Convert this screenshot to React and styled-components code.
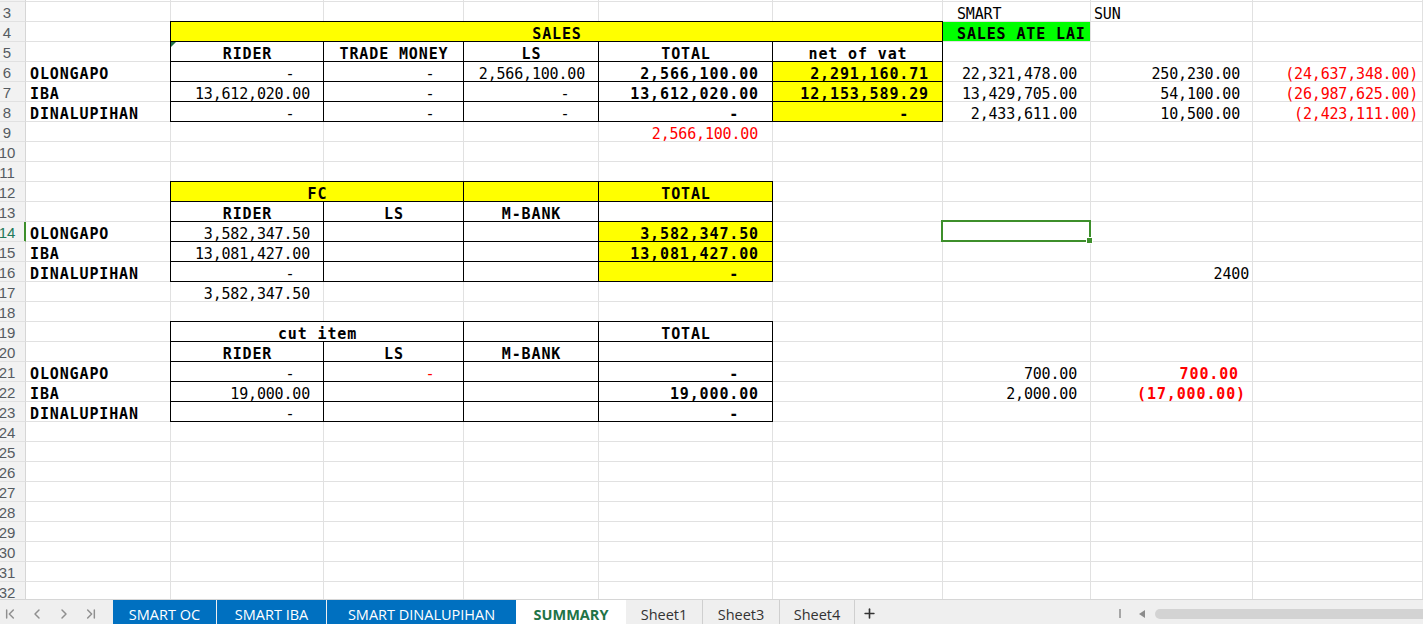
import React from "react";
import styled, { createGlobalStyle } from "styled-components";
import { ChevronFirst, ChevronLeft, ChevronRight, ChevronLast, Plus } from "lucide-react";

const GlobalStyle = createGlobalStyle`
  html, body {
    margin: 0;
    padding: 0;
    background: #fff;
    overflow: hidden;
  }
`;

const Window = styled.div`
  width: 1423px;
  height: 624px;
  display: flex;
  flex-direction: column;
  overflow: hidden;
  background: #fff;
`;

const Sheet = styled.div`
  flex: 1;
  min-height: 0;
  overflow: hidden;
  display: grid;
  grid-template-columns: 26px 145px 153px 140px 135px 174px 170px 148px 162px 1fr;
  grid-template-rows: 2px;
  grid-auto-rows: 20px;
  align-content: start;
`;

const fills = { yellow: "#ffff00", green: "#00ff00" };
const grid = "#e1e1e1";

const RowHead = styled.div`
  box-sizing: border-box;
  background: #f2f2f2;
  border-right: 1px solid ${(p) => (p.$active ? "#3d8f2b" : "#d6d6d6")};
  box-shadow: ${(p) => (p.$active ? "inset -1px 0 0 #3d8f2b" : "none")};
  border-bottom: 1px solid ${grid};
  padding: 1px 11px 0 0;
  display: flex;
  align-items: center;
  justify-content: center;
  font-family: "Liberation Sans", Arial, sans-serif;
  font-size: 15px;
  color: ${(p) => (p.$active ? "#21795a" : "#555b61")};
  white-space: nowrap;
`;

const Cell = styled.div`
  position: ${(p) => (p.$rel ? "relative" : "static")};
  box-sizing: border-box;
  grid-column: span ${(p) => p.$span || 1};
  min-width: 0;
  background: ${(p) => fills[p.$fill] || "#fff"};
  border-right: 1px solid ${(p) => (p.$box ? "#000" : grid)};
  border-bottom: 1px solid ${(p) => (p.$box ? "#000" : grid)};
  box-shadow: ${(p) =>
    p.$box ? "-1px 0 0 #000, 0 -1px 0 #000, -1px -1px 0 #000" : "none"};
  display: flex;
  align-items: flex-end;
  justify-content: ${(p) =>
    p.$align === "center" ? "center" : p.$align === "right" ? "flex-end" : "flex-start"};
  padding: 0 ${(p) => p.$pr ?? 3}px 0 ${(p) => p.$pl ?? 4}px;
  font-family: "DejaVu Sans Mono", "Liberation Mono", monospace;
  font-size: 15px;
  line-height: 13px;
  font-weight: ${(p) => (p.$bold ? 700 : 400)};
  letter-spacing: ${(p) => (p.$bold ? "0.87px" : "-0.18px")};
  color: ${(p) => (p.$red ? "#ff0000" : "#000")};
  white-space: pre;
`;

const Marker = styled.span`
  position: absolute;
  left: 0;
  top: 0;
  z-index: 2;
  width: 0;
  height: 0;
  border-top: 5px solid #217346;
  border-right: 5px solid transparent;
`;

const Selection = styled.div`
  position: absolute;
  left: -2px;
  top: -2px;
  right: -1px;
  bottom: -1px;
  z-index: 3;
  border: 2px solid #3d8f2b;
  pointer-events: none;
`;

const Handle = styled.span`
  position: absolute;
  right: -4px;
  bottom: -4px;
  width: 5px;
  height: 5px;
  background: #3d8f2b;
  border: 1px solid #fff;
`;

/* ---- sheet tabs ---- */

const TabBar = styled.div`
  flex: none;
  height: 25px;
  box-sizing: border-box;
  display: flex;
  align-items: stretch;
  background: #efefef;
  border-top: 1px solid #d6d6d6;
  overflow: hidden;
  font-family: "Open Sans", "Noto Sans", sans-serif;
  font-size: 14.5px;
`;

const Nav = styled.div`
  width: 113px;
  flex: none;
  box-sizing: border-box;
  display: flex;
  align-items: center;
  gap: 11px;
  padding: 3px 0 0 2px;
  color: #8f8f8f;
`;

const Tab = styled.div`
  flex: none;
  width: ${(p) => p.$w}px;
  margin: ${(p) => (p.$kind === "gray" ? "0" : "-1px 0 0")};
  margin-left: ${(p) => p.$gap || 0}px;
  box-sizing: border-box;
  display: flex;
  align-items: flex-end;
  justify-content: center;
  padding-bottom: 2px;
  line-height: 14px;
  white-space: nowrap;
  background: ${(p) =>
    p.$kind === "blue" ? "#0070c0" : p.$kind === "active" ? "#fff" : "#efefef"};
  color: ${(p) =>
    p.$kind === "blue" ? "#fff" : p.$kind === "active" ? "#217346" : "#333"};
  font-weight: ${(p) => (p.$kind === "active" ? 700 : 400)};
  border-left: ${(p) => (p.$kind === "gray" && p.$sep ? "1px solid #cfcfcf" : "none")};
`;

const AddTab = styled.div`
  width: 28px;
  flex: none;
  display: flex;
  align-items: center;
  justify-content: center;
  padding-top: 3px;
  border-left: 1px solid #cfcfcf;
  color: #333;
`;

const Spacer = styled.div`
  flex: 1;
`;

const ScrollArea = styled.div`
  width: 304px;
  flex: none;
  display: flex;
  align-items: center;
  padding-top: 3px;
`;

const Splitter = styled.span`
  width: 2px;
  height: 9px;
  background: #a6a6a6;
  margin-right: 18px;
`;

const LeftArrow = styled.span`
  width: 0;
  height: 0;
  border-top: 4px solid transparent;
  border-bottom: 4px solid transparent;
  border-right: 6px solid #8c8c8c;
  margin-right: 10px;
`;

const Track = styled.span`
  flex: 1;
  height: 10px;
  margin-right: -12px;
  border-radius: 5px;
  background: #d3d3d3;
`;

/* ---- data ---- */

const COLS = ["A", "B", "C", "D", "E", "F", "G", "H", "I"];

const lab = (t) => ({ t, bold: true, pl: 4 });
const head = (t, o) => ({ t, bold: true, align: "center", box: true, ...o });
const num = (t, o) => ({ t, align: "right", pr: 13, ...o });
const dash = (o) => ({ t: "-  ", align: "right", pr: o && o.bold ? 13 : 11, ...o });
const box = (o) => ({ box: true, ...o });

const ROWS = {
  3: { G: { t: "SMART", pl: 14 }, H: { t: "SUN", pl: 3 } },
  4: {
    B: head("SALES", { span: 5, fill: "yellow" }),
    G: { t: "SALES ATE LAI", bold: true, fill: "green", pl: 14 },
  },
  5: {
    B: head("RIDER", { mark: true }),
    C: head("TRADE MONEY"),
    D: head("LS"),
    E: head("TOTAL"),
    F: head("net of vat"),
  },
  6: {
    A: lab("OLONGAPO"),
    B: dash({ box: true }),
    C: dash({ box: true }),
    D: num("2,566,100.00", { box: true }),
    E: num("2,566,100.00", { box: true, bold: true }),
    F: num("2,291,160.71", { box: true, bold: true, fill: "yellow" }),
    G: num("22,321,478.00"),
    H: num("250,230.00", { pr: 12 }),
    I: num("(24,637,348.00)", { red: true, pr: 4 }),
  },
  7: {
    A: lab("IBA"),
    B: num("13,612,020.00", { box: true }),
    C: dash({ box: true }),
    D: dash({ box: true }),
    E: num("13,612,020.00", { box: true, bold: true }),
    F: num("12,153,589.29", { box: true, bold: true, fill: "yellow" }),
    G: num("13,429,705.00"),
    H: num("54,100.00", { pr: 12 }),
    I: num("(26,987,625.00)", { red: true, pr: 4 }),
  },
  8: {
    A: lab("DINALUPIHAN"),
    B: dash({ box: true }),
    C: dash({ box: true }),
    D: dash({ box: true }),
    E: dash({ box: true, bold: true }),
    F: dash({ box: true, bold: true, fill: "yellow" }),
    G: num("2,433,611.00"),
    H: num("10,500.00", { pr: 12 }),
    I: num("(2,423,111.00)", { red: true, pr: 4 }),
  },
  9: { E: num("2,566,100.00", { red: true, pr: 14 }) },
  12: {
    B: head("FC", { span: 2, fill: "yellow" }),
    D: box({ fill: "yellow" }),
    E: head("TOTAL", { fill: "yellow" }),
  },
  13: { B: head("RIDER"), C: head("LS"), D: head("M-BANK"), E: box() },
  14: {
    A: lab("OLONGAPO"),
    B: num("3,582,347.50", { box: true }),
    C: box(),
    D: box(),
    E: num("3,582,347.50", { box: true, bold: true, fill: "yellow" }),
    G: { selected: true },
  },
  15: {
    A: lab("IBA"),
    B: num("13,081,427.00", { box: true }),
    C: box(),
    D: box(),
    E: num("13,081,427.00", { box: true, bold: true, fill: "yellow" }),
  },
  16: {
    A: lab("DINALUPIHAN"),
    B: dash({ box: true }),
    C: box(),
    D: box(),
    E: dash({ box: true, bold: true, fill: "yellow" }),
    H: num("2400", { pr: 3 }),
  },
  17: { B: num("3,582,347.50") },
  19: {
    B: head("cut item", { span: 2 }),
    D: box(),
    E: head("TOTAL"),
  },
  20: { B: head("RIDER"), C: head("LS"), D: head("M-BANK"), E: box() },
  21: {
    A: lab("OLONGAPO"),
    B: dash({ box: true }),
    C: dash({ box: true, red: true }),
    D: box(),
    E: dash({ box: true, bold: true }),
    G: num("700.00"),
    H: num("700.00", { bold: true, red: true }),
  },
  22: {
    A: lab("IBA"),
    B: num("19,000.00", { box: true }),
    C: box(),
    D: box(),
    E: num("19,000.00", { box: true, bold: true }),
    G: num("2,000.00"),
    H: num("(17,000.00)", { bold: true, red: true, pr: 6 }),
  },
  23: {
    A: lab("DINALUPIHAN"),
    B: dash({ box: true }),
    C: box(),
    D: box(),
    E: dash({ box: true, bold: true }),
  },
};

const TABS = [
  { label: "SMART OC", w: 103, kind: "blue" },
  { label: "SMART IBA", w: 109, kind: "blue", gap: 1 },
  { label: "SMART DINALUPIHAN", w: 189, kind: "blue", gap: 1 },
  { label: "SUMMARY", w: 110, kind: "active" },
  { label: "Sheet1", w: 76, kind: "gray" },
  { label: "Sheet3", w: 77, kind: "gray", sep: true },
  { label: "Sheet4", w: 75, kind: "gray", sep: true },
];

function DataCell({ d = {} }) {
  return (
    <Cell
      $span={d.span}
      $box={d.box}
      $fill={d.fill}
      $bold={d.bold}
      $red={d.red}
      $align={d.align}
      $pl={d.pl}
      $pr={d.pr}
      $rel={d.mark || d.selected}
    >
      {d.t}
      {d.mark && <Marker />}
      {d.selected && (
        <Selection>
          <Handle />
        </Selection>
      )}
    </Cell>
  );
}

function SheetRow({ n, defs }) {
  const cells = [];
  for (let i = 0; i < COLS.length; ) {
    const d = defs[COLS[i]];
    cells.push(<DataCell key={COLS[i]} d={d} />);
    i += (d && d.span) || 1;
  }
  return (
    <>
      <RowHead $active={n === 14}>{n}</RowHead>
      {cells}
    </>
  );
}

export default function App() {
  const rowNums = [];
  for (let n = 3; n <= 32; n++) rowNums.push(n);

  return (
    <Window>
      <GlobalStyle />
      <Sheet>
        <RowHead />
        {COLS.map((c) => (
          <Cell key={"top" + c} />
        ))}
        {rowNums.map((n) => (
          <SheetRow key={n} n={n} defs={ROWS[n] || {}} />
        ))}
      </Sheet>
      <TabBar>
        <Nav>
          <ChevronFirst size={16} strokeWidth={2.2} />
          <ChevronLeft size={16} strokeWidth={2.2} />
          <ChevronRight size={16} strokeWidth={2.2} />
          <ChevronLast size={16} strokeWidth={2.2} />
        </Nav>
        {TABS.map((t) => (
          <Tab key={t.label} $w={t.w} $kind={t.kind} $gap={t.gap} $sep={t.sep}>
            {t.label}
          </Tab>
        ))}
        <AddTab>
          <Plus size={15} strokeWidth={2.6} />
        </AddTab>
        <Spacer />
        <ScrollArea>
          <Splitter />
          <LeftArrow />
          <Track />
        </ScrollArea>
      </TabBar>
    </Window>
  );
}
